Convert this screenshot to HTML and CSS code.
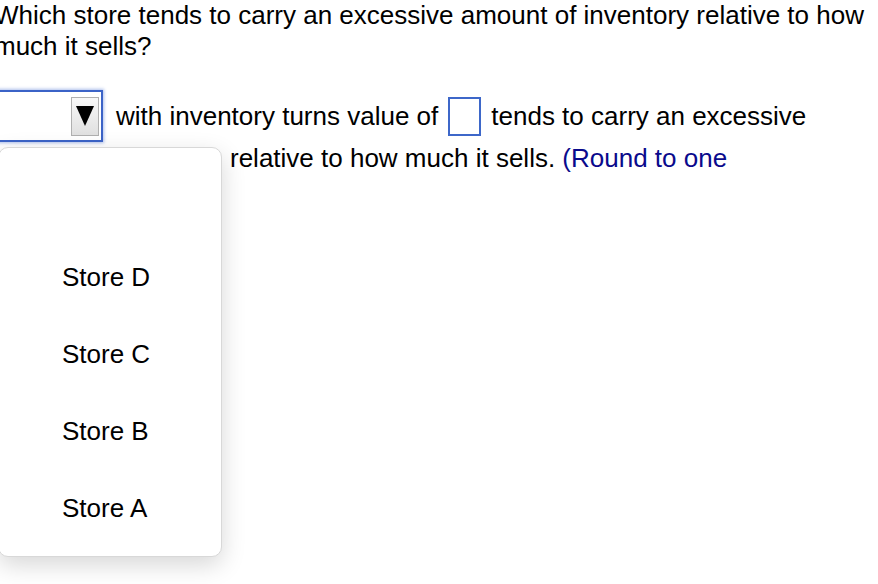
FILE: index.html
```html
<!DOCTYPE html>
<html>
<head>
<meta charset="utf-8">
<link rel="stylesheet" href="styles.css">
</head>
<body>
<div class="page">
  <p class="question">Which store tends to carry an excessive amount of inventory relative to how much it sells?</p>
  <div class="answer">
    <div class="row">
      <div class="select">
        <span class="arrow-btn">
          <svg width="18" height="22" viewBox="0 0 18 22"><polygon points="0,1 18,1 9,21" fill="#000"/></svg>
        </span>
      </div>
      <span class="txt first">with inventory turns value of</span>
      <span class="num-input"></span>
      <span class="txt">tends to carry an excessive</span>
    </div>
    <div class="line2">relative to how much it sells. <span class="hint">(Round to one</span></div>
    <ul class="menu">
      <li class="opt"></li>
      <li class="opt">Store D</li>
      <li class="opt">Store C</li>
      <li class="opt">Store B</li>
      <li class="opt">Store A</li>
    </ul>
  </div>
</div>
</body>
</html>
```

FILE: styles.css
```css
html, body {
  margin: 0;
  padding: 0;
  background: #fff;
  overflow: hidden;
}
body {
  min-height: 584px;
}
.page {
  margin-left: -6px;
  width: 880px;
  min-height: 584px;
  font-family: "Liberation Sans", Arial, sans-serif;
  font-size: 26px;
  line-height: 31px;
  color: #000;
}
.question {
  margin: 0;
}
.answer {
  position: relative;
  margin-top: 28px;
}
.row {
  display: flex;
  align-items: center;
  height: 52px;
}
.select {
  width: 105px;
  height: 48px;
  margin-left: -2px;
  border: 2px solid #3b63c7;
  box-shadow: 0 0 3px 1px rgba(70, 110, 210, 0.45);
  background: #fff;
  display: flex;
  align-items: center;
  justify-content: flex-end;
  padding-right: 2px;
  box-sizing: content-box;
}
.arrow-btn {
  width: 26px;
  height: 37px;
  border: 1px solid #b0b0b0;
  background: linear-gradient(#f8f8f8, #e0e0e0);
  display: flex;
  align-items: center;
  justify-content: center;
}
.arrow-btn svg {
  display: block;
}
.txt.first {
  margin-left: 13px;
}
.num-input {
  width: 29px;
  height: 35px;
  border: 2px solid #3d67c9;
  margin: 0 10px;
  background: #fff;
}
.line2 {
  padding-left: 236px;
  margin-top: 1px;
}
.hint {
  color: #0a0a8c;
}
.menu {
  position: absolute;
  left: 4px;
  top: 57px;
  width: 224px;
  height: 410px;
  margin: 0;
  padding: 14px 0 10px;
  list-style: none;
  background: #fff;
  border: 1px solid #d8d8d8;
  border-radius: 10px;
  box-shadow: 0 8px 24px rgba(0, 0, 0, 0.16);
  box-sizing: border-box;
}
.opt {
  height: 77px;
  line-height: 77px;
  padding-left: 63px;
}
```
